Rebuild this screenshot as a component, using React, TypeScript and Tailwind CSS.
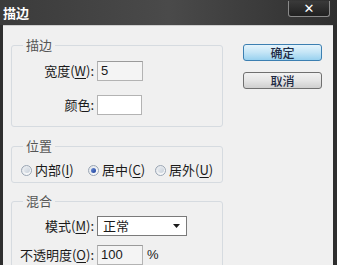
import React from "react";

const font = { fontFamily: '"Noto Sans CJK SC", "Noto Sans", sans-serif' };

function Radio({ checked }: { checked?: boolean }) {
  return (
    <span className="relative inline-flex h-[11px] w-[11px] shrink-0 items-center justify-center rounded-full border border-[#9aa6b4] bg-gradient-to-br from-[#dfe3e8] to-[#ffffff]">
      {checked ? (
        <span className="h-[5px] w-[5px] rounded-full bg-gradient-to-br from-[#6f8fd8] to-[#1c3f9a]" />
      ) : (
        <span className="h-[6px] w-[6px] rounded-full bg-gradient-to-br from-[#e8ecf1] to-[#c9d1da]" />
      )}
    </span>
  );
}

function U({ c }: { c: string }) {
  return <span className="underline underline-offset-2">{c}</span>;
}

export default function App() {
  return (
    <div
      className="flex h-[265px] w-[337px] flex-col overflow-hidden bg-[#2e2e2e] text-[13px] text-[#1a1a1a]"
      style={font}
    >
      {/* title bar */}
      <div className="relative flex h-[25px] shrink-0 items-center justify-between bg-gradient-to-r from-[#3b3b3b] via-[#4a4a4a] to-[#2f2f2f] pl-[3px] pr-[7px]">
        <span className="text-[13px] font-bold leading-none text-white">描边</span>
        <div className="mb-[8px] flex h-[16px] w-[42px] items-center justify-center rounded-b-[3px] border border-t-0 border-[#8a8a8a] bg-gradient-to-b from-[#3a3a3a] to-[#202020]">
          <span className="text-[13px] font-bold leading-none text-white" style={{ fontFamily: '"DejaVu Sans", sans-serif' }}>✕</span>
        </div>
      </div>
      {/* body */}
      <div className="ml-[3px] mr-[4px] flex flex-1 border-t border-[#cfcfcf] bg-[#f0f0f0] pl-[8px] pt-[11px]">
        <div className="flex w-[212px] flex-col">
          {/* group 1 */}
          <fieldset className="rounded-[3px] border border-[#d6dbe0] pb-[11px] pt-[8px]">
            <legend className="ml-[11px] px-[3px] leading-[16px] text-[#555]">描边</legend>
            <div className="grid grid-cols-[84px_auto] items-center gap-x-[1px] gap-y-[14px]">
              <span className="whitespace-nowrap pr-[2px] text-right">宽度(<U c="W" />):</span>
              <div className="flex h-[20px] w-[46px] items-center border border-[#b3b3b3] border-t-[#9a9a9a] bg-[#f4f4f4] pl-[3px]" style={{ fontFamily: '"Liberation Sans", sans-serif' }}>5</div>
              <span className="pr-[2px] text-right">颜色:</span>
              <div className="h-[20px] w-[45px] border border-[#b3b3b3] bg-white" />
            </div>
          </fieldset>
          {/* group 2 */}
          <fieldset className="mt-[11px] rounded-[3px] border border-[#d6dbe0] pb-[4px] pt-[8px]">
            <legend className="ml-[11px] px-[3px] leading-[16px] text-[#555]">位置</legend>
            <div className="flex h-[16px] items-center pl-[9px]">
              <div className="flex w-[67px] items-center">
                <Radio />
                <span className="ml-[3px] whitespace-nowrap">内部(<U c="I" />)</span>
              </div>
              <div className="flex w-[67px] items-center">
                <Radio checked />
                <span className="ml-[3px] whitespace-nowrap">居中(<U c="C" />)</span>
              </div>
              <div className="flex items-center">
                <Radio />
                <span className="ml-[3px] whitespace-nowrap">居外(<U c="U" />)</span>
              </div>
            </div>
          </fieldset>
          {/* group 3 */}
          <fieldset className="mt-[10px] rounded-[3px] border border-[#d6dbe0] pb-[8px] pt-[7px]">
            <legend className="ml-[11px] px-[3px] leading-[16px] text-[#555]">混合</legend>
            <div className="grid grid-cols-[84px_auto] items-center gap-x-[1px] gap-y-[9px]">
              <span className="whitespace-nowrap pr-[2px] text-right">模式(<U c="M" />):</span>
              <div className="flex h-[20px] w-[90px] items-center justify-between border border-[#7a7a7a] bg-white pl-[5px] pr-[6px]">
                <span>正常</span>
                <svg width="7" height="4" viewBox="0 0 7 4"><path d="M0 0h7L3.5 4z" fill="#1a1a1a" /></svg>
              </div>
              <span className="whitespace-nowrap pr-[2px] text-right">不透明度(<U c="O" />):</span>
              <div className="flex items-center">
                <div className="flex h-[20px] w-[46px] items-center border border-[#b3b3b3] border-t-[#9a9a9a] bg-[#f4f4f4] pl-[3px]" style={{ fontFamily: '"Liberation Sans", sans-serif' }}>100</div>
                <span className="ml-[4px]" style={{ fontFamily: '"Liberation Sans", sans-serif' }}>%</span>
              </div>
            </div>
          </fieldset>
        </div>
        <div className="ml-[20px] flex flex-col gap-[11px] pt-[7px]">
          <button className="flex h-[17px] w-[79px] items-center justify-center rounded-[3px] border border-[#3c7fb1] bg-gradient-to-b from-[#e5f4fc] via-[#c4e5f6] to-[#98d1ef] text-[12px] font-medium leading-none text-[#1f2a44]">确定</button>
          <button className="flex h-[17px] w-[79px] items-center justify-center rounded-[3px] border border-[#707070] bg-gradient-to-b from-[#f2f2f2] via-[#e5e5e5] to-[#cfcfcf] text-[12px] font-medium leading-none text-[#1f2a44]">取消</button>
        </div>
      </div>
    </div>
  );
}
